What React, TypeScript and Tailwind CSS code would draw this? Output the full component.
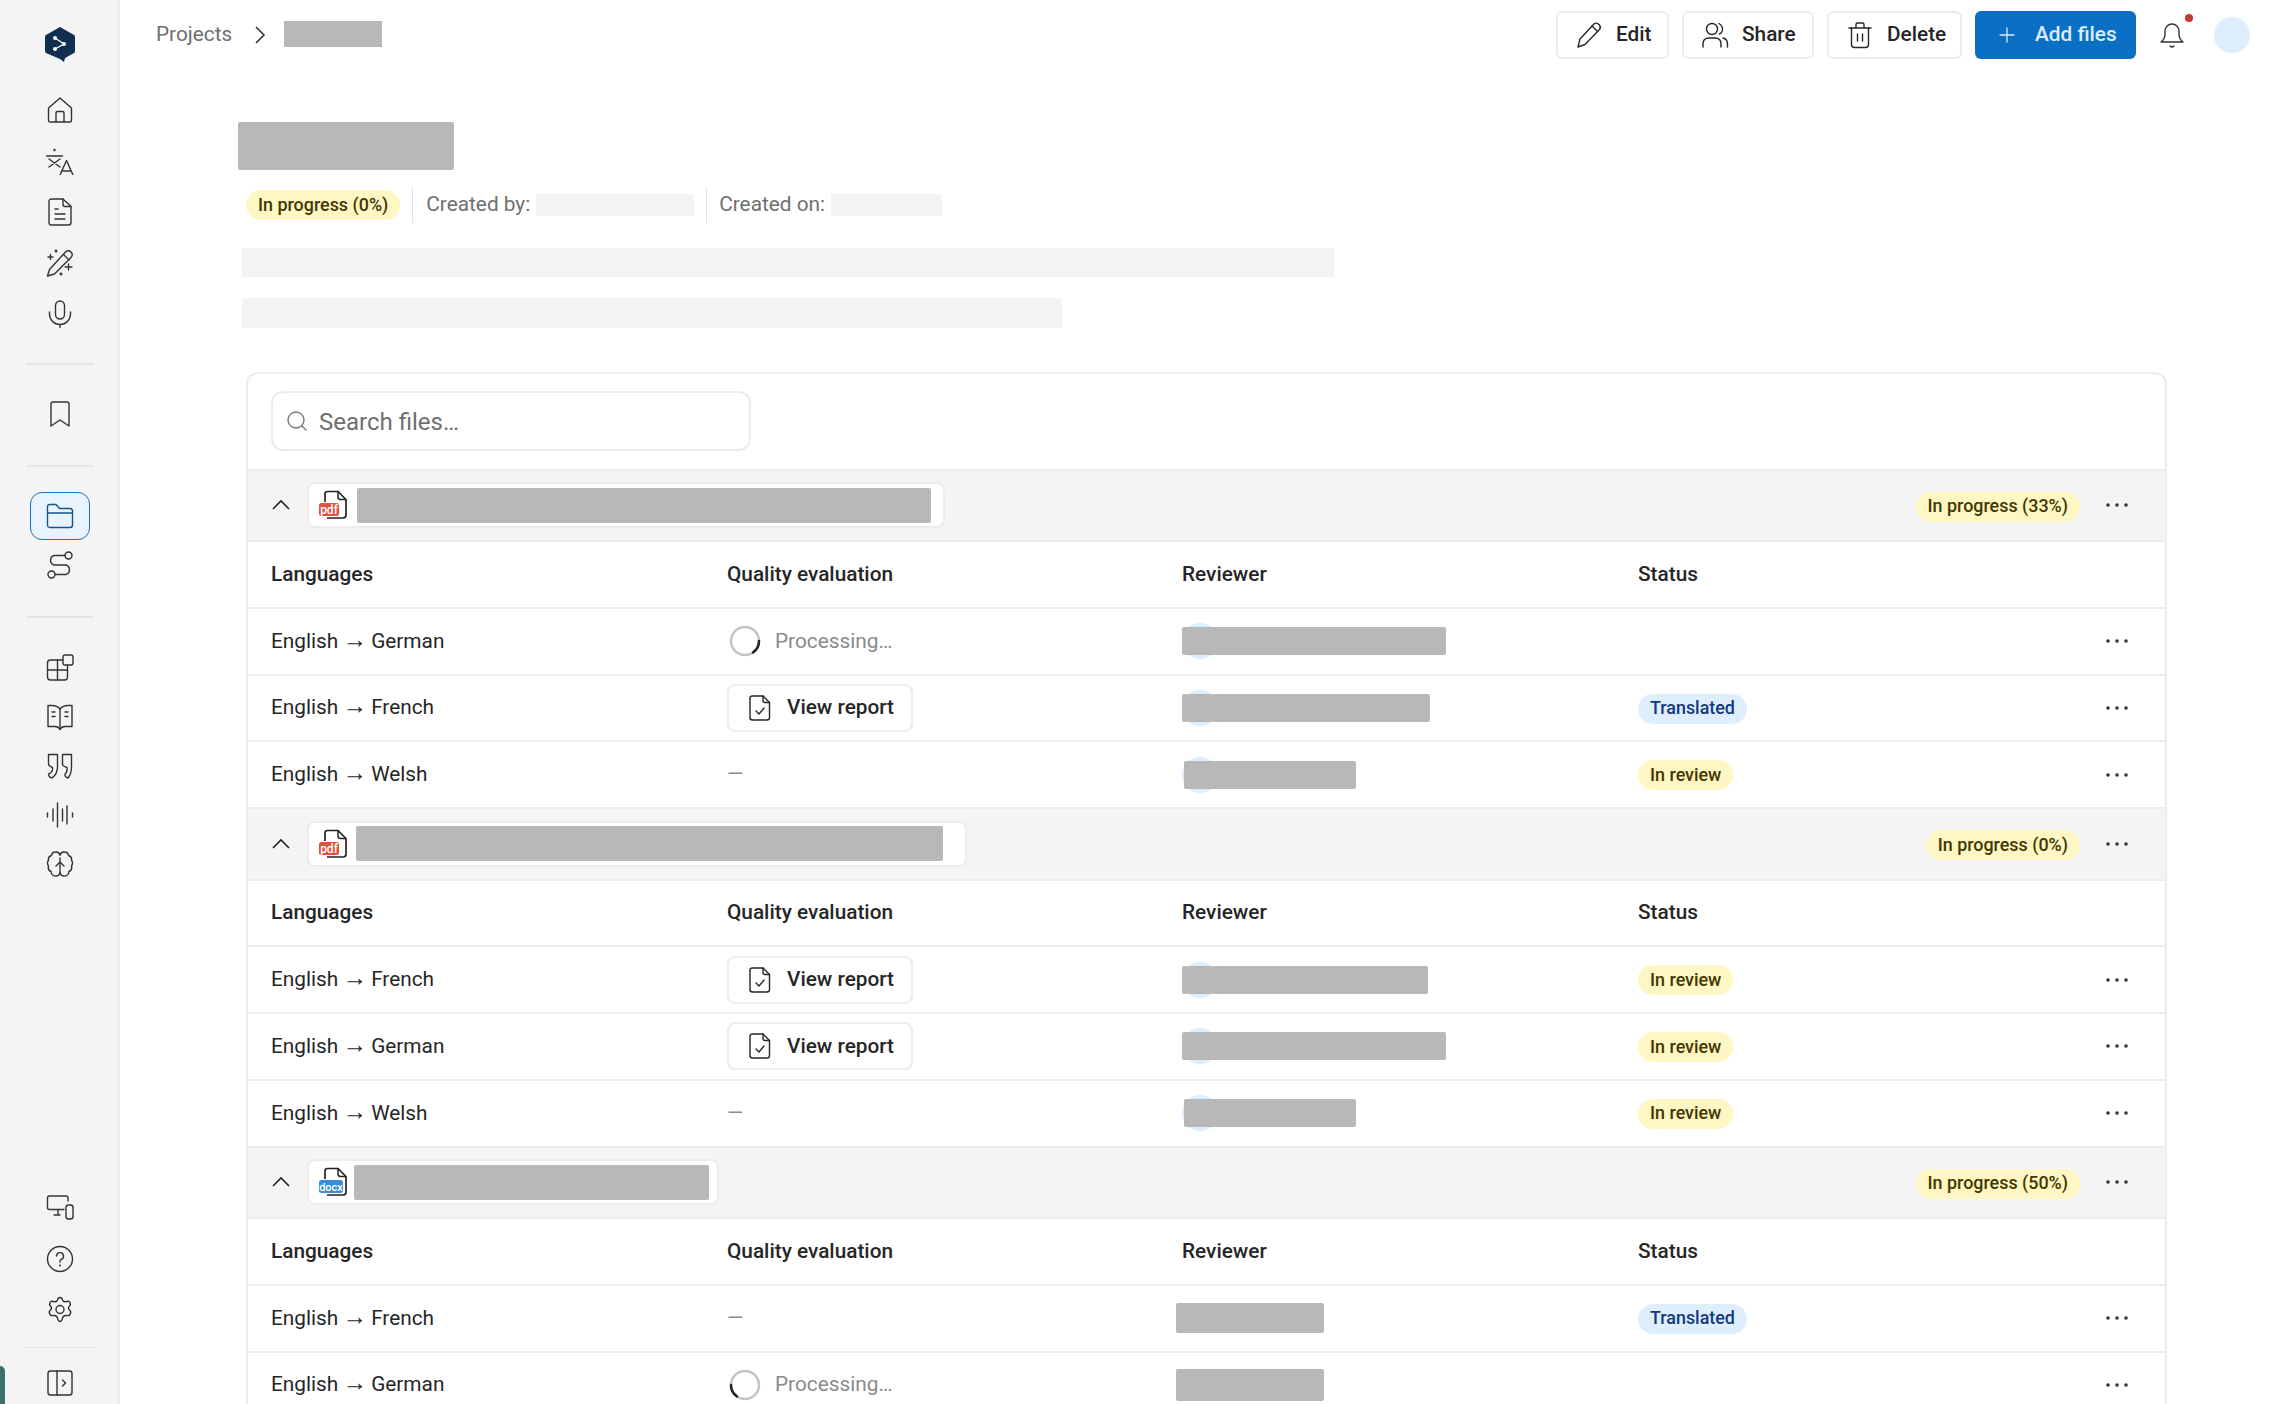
import type { ReactNode } from "react";
import { Plus, Search } from "lucide-react";

type Reviewer = { width: number; left: number; height?: number };

type Row = {
  lang: string;
  quality: "processing" | "report" | "none";
  arc?: "right" | "left";
  reviewer: Reviewer;
  status?: "Translated" | "In review";
};

type FileGroup = {
  kind: "pdf" | "docx";
  pillWidth: number;
  nameGap: number;
  nameWidth: number;
  progress: string;
  rows: Row[];
};

const files: FileGroup[] = [
  {
    kind: "pdf",
    pillWidth: 638,
    nameGap: 8,
    nameWidth: 574,
    progress: "In progress (33%)",
    rows: [
      { lang: "German", quality: "processing", arc: "right", reviewer: { width: 264, left: 0 } },
      { lang: "French", quality: "report", reviewer: { width: 248, left: 0 }, status: "Translated" },
      { lang: "Welsh", quality: "none", reviewer: { width: 172, left: 2 }, status: "In review" },
    ],
  },
  {
    kind: "pdf",
    pillWidth: 660,
    nameGap: 7,
    nameWidth: 587,
    progress: "In progress (0%)",
    rows: [
      { lang: "French", quality: "report", reviewer: { width: 246, left: 0 }, status: "In review" },
      { lang: "German", quality: "report", reviewer: { width: 264, left: 0 }, status: "In review" },
      { lang: "Welsh", quality: "none", reviewer: { width: 172, left: 2 }, status: "In review" },
    ],
  },
  {
    kind: "docx",
    pillWidth: 412,
    nameGap: 5,
    nameWidth: 355,
    progress: "In progress (50%)",
    rows: [
      { lang: "French", quality: "none", reviewer: { width: 148, left: -6, height: 30 }, status: "Translated" },
      { lang: "German", quality: "processing", arc: "left", reviewer: { width: 148, left: -6, height: 32 } },
    ],
  },
];

function Ico({ children, size = 28 }: { children: ReactNode; size?: number }) {
  return (
    <svg width={size} height={size} viewBox="0 0 28 28" fill="none" stroke="currentColor" strokeWidth="1.4" strokeLinecap="round" strokeLinejoin="round">
      {children}
    </svg>
  );
}

function Logo() {
  return (
    <svg width="32" height="38" viewBox="0 0 32 38">
      <path d="M16 1 L30 9 Q31 9.500 31 11 V25 Q31 26.500 30 27 L21 32 L20 36 L16 33 L2 27 Q1 26.500 1 25 V11 Q1 9.500 2 9 Z" fill="#0f2e50" />
      <path d="M11 12 L20 18 L11 23" stroke="#fff" strokeWidth="1.300" fill="none" />
      <circle cx="11" cy="12" r="2" fill="#fff" />
      <circle cx="20" cy="18" r="2" fill="#fff" />
      <circle cx="11" cy="23" r="2" fill="#fff" />
    </svg>
  );
}

const sideIcons: Record<string, ReactNode> = {
  home: (
    <>
      <path d="M2.500 12 L14 2 L25.500 12 V24 Q25.500 26 23.500 26 H4.500 Q2.500 26 2.500 24 Z" />
      <path d="M10 26 V17 Q10 15.500 11.500 15.500 H16.500 Q18 15.500 18 17 V26" />
    </>
  ),
  translate: (
    <>
      <path d="M0.500 9 H16.500" />
      <circle cx="8.500" cy="3" r="0.500" />
      <path d="M3 12 L14 20 M14 12 L3 20" />
      <path d="M14 28 L20.500 13.500 L27 28 M16 24 H25" />
    </>
  ),
  doc: (
    <>
      <path d="M5.500 1 H17 L25 8.500 V24.500 Q25 27 22.500 27 H5.500 Q3 27 3 24.500 V3.500 Q3 1 5.500 1 Z" />
      <path d="M17 1 V6.500 Q17 8.500 19 8.500 H25" />
      <path d="M9 11 H12 M9 16 H19 M9 21 H19" />
    </>
  ),
  wand: (
    <>
      <path d="M1.500 27 L3.500 20.500 L19.500 3 Q22.500 0.500 25 3 Q27.500 5.500 25 8.500 L8.500 25 Z" />
      <path d="M17.500 5.500 L23 11" />
      <path d="M2 8 H7 M4.500 5.500 V10.500 M10 1 V3 M9 2 H11 M19 18 H26 M22.500 15 V21 M15 24 V26 M14 25 H16" />
    </>
  ),
  mic: (
    <>
      <rect x="9.500" y="1" width="9" height="18" rx="4.500" />
      <path d="M3.500 12 V14 A10.500 10.500 0 0 0 24.500 14 V12 M14 24.500 V27.500" />
    </>
  ),
  bookmark: <path d="M5 26 V4 Q5 2 7 2 H21 Q23 2 23 4 V26 L14 20 Z" />,
  folder: (
    <>
      <path d="M1.500 5 Q1.500 2.500 4 2.500 H10 L13.500 6.500 H24 Q26.500 6.500 26.500 9 V23 Q26.500 25.500 24 25.500 H4 Q1.500 25.500 1.500 23 Z" />
      <path d="M1.500 11 H26.500" />
    </>
  ),
  route: (
    <>
      <circle cx="22.500" cy="4.500" r="3.500" />
      <circle cx="5.500" cy="23.500" r="3.500" />
      <path d="M19 4.500 H8 A5 5 0 0 0 8 14 H20 A5 5 0 0 1 20 23.500 H9" />
    </>
  ),
  grid: (
    <>
      <rect x="1.500" y="6" width="20" height="20" rx="3" />
      <path d="M11.500 6 V26 M1.500 16 H21.500" />
      <rect x="17" y="1" width="10" height="10" rx="2" fill="#f4f4f4" />
    </>
  ),
  book: (
    <>
      <path d="M14 6 Q11 2.500 6 2.500 H2 V23.500 H9 Q12.500 23.500 14 26.500 Q15.500 23.500 19 23.500 H26 V2.500 H22 Q17 2.500 14 6 Z" />
      <path d="M14 6 V26 M6 9 H9 M6 13.500 H9 M19 9 H22 M19 13.500 H22" />
    </>
  ),
  quote: (
    <>
      <path d="M2.500 2.500 H11.500 V15 Q11.500 22 6 26 Q2.500 25 2.500 22 Q7 20.500 6.500 15.500 Q2.500 14 2.500 12 Z" />
      <path d="M16.500 2.500 H25.500 V15 Q25.500 22 22 26 Q18.500 25 19 22 Q21.500 20.500 21 15.500 Q16.500 14 16.500 12 Z" />
    </>
  ),
  wave: <path d="M1.500 12 V16 M7 8 V20 M11.500 2 V26 M16.500 8 V20 M21 5 V23 M26.500 12 V16" />,
  brain: (
    <>
      <path d="M14 5 Q13 1.500 9.500 2 Q6 2 5.500 5.500 Q2 6.500 2.500 10 Q0.500 13 2.500 16 Q1.500 20 5 21.500 Q5.500 26 10 26 Q13 26 14 23" />
      <path d="M14 5 Q15 1.500 18.500 2 Q22 2 22.500 5.500 Q26 6.500 25.500 10 Q27.500 13 25.500 16 Q26.500 20 23 21.500 Q22.500 26 18 26 Q15 26 14 23" />
      <path d="M14 8 V23 M10 16 L14 12 L18 16" />
    </>
  ),
  devices: (
    <>
      <path d="M18 15.500 H3.500 Q1.500 15.500 1.500 13.500 V4 Q1.500 2 3.500 2 H20 Q22 2 22 4 V7" />
      <path d="M12 16 V21 M8 21 H14" />
      <rect x="20" y="11" width="7" height="14" rx="2.500" />
    </>
  ),
  help: (
    <>
      <circle cx="14" cy="14" r="12.500" />
      <path d="M10.500 11 A3.500 3.500 0 1 1 15 14.500 Q14 15 14 17" />
      <circle cx="14" cy="20.500" r="0.400" />
    </>
  ),
  gear: (
    <>
      <path d="M14 1.500 Q16 1.500 16.500 4 Q17.500 6.500 20.500 5.500 Q23 4.500 24 6.500 Q25 8.500 23.500 10 Q21.500 12.500 23.500 14 L24 14.500 Q25.500 16 24 18.500 Q23 20 20.500 19.500 Q17.500 19 16.500 22 Q16 25.500 14 25.500 Q12 25.500 11.500 22 Q10.500 19 7.500 19.500 Q5 20 4 18.500 Q2.500 16 4 14.500 L4.500 14 Q6.500 12.500 4.500 10 Q3 8.500 4 6.500 Q5 4.500 7.500 5.500 Q10.500 6.500 11.500 4 Q12 1.500 14 1.500 Z" />
      <circle cx="14" cy="13.500" r="4" />
    </>
  ),
  panel: (
    <>
      <rect x="2" y="2" width="24" height="24" rx="2.500" />
      <path d="M11 2 V26 M16.500 11 L19.500 14 L16.500 17" />
    </>
  ),
};

function SideItem({ name, h, active }: { name: string; h: string; active?: boolean }) {
  return (
    <div className={`flex w-[60px] shrink-0 items-center justify-center ${h} ${active ? "rounded-[12px] border border-[#1a73bd] bg-[#e8f3fd] text-[#16548f]" : "text-[#333333]"}`}>
      <Ico>{sideIcons[name]}</Ico>
    </div>
  );
}

function Divider({ className }: { className: string }) {
  return <div className={`h-[2px] w-[68px] shrink-0 bg-[#e6e6e6] ${className}`} />;
}

function Sidebar() {
  return (
    <aside className="relative flex h-full w-[120px] shrink-0 flex-col items-center border-r-2 border-[#ececec] bg-[#f4f4f4] pt-[26px] pl-[2px]">
      <div className="mb-[20px] flex h-[38px] items-center">
        <Logo />
      </div>
      <SideItem name="home" h="h-[51px]" />
      <SideItem name="translate" h="h-[51px]" />
      <SideItem name="doc" h="h-[51px]" />
      <SideItem name="wand" h="h-[51px]" />
      <SideItem name="mic" h="h-[51px]" />
      <Divider className="mt-[24px] mb-[24px]" />
      <SideItem name="bookmark" h="h-[50px]" />
      <Divider className="mt-[26px] mb-[25px]" />
      <SideItem name="folder" h="h-[48px]" active />
      <SideItem name="route" h="h-[49px]" />
      <Divider className="mt-[27px] mb-[25px]" />
      <SideItem name="grid" h="h-[49px]" />
      <SideItem name="book" h="h-[49px]" />
      <SideItem name="quote" h="h-[49px]" />
      <SideItem name="wave" h="h-[49px]" />
      <SideItem name="brain" h="h-[49px]" />
      <div className="flex-1" />
      <SideItem name="devices" h="h-[51px]" />
      <SideItem name="help" h="h-[51px]" />
      <SideItem name="gear" h="h-[51px]" />
      <div className="mt-[12px] mb-[14px] h-px w-[70px] bg-[#e3e3e3]" />
      <SideItem name="panel" h="h-[42px]" />
      <div className="absolute bottom-0 left-0 h-[38px] w-[5px] rounded-tr-full bg-[#3c6e6b]" />
    </aside>
  );
}

function TopButton({ icon, label, width }: { icon: ReactNode; label: string; width: string }) {
  return (
    <button className={`flex h-[48px] items-center gap-[13px] rounded-[6px] border-2 border-[#ececec] bg-white pl-[17px] text-[20.800px] font-medium text-[#262626] ${width}`}>
      {icon}
      {label}
    </button>
  );
}

function TopBar() {
  return (
    <header className="flex h-[70px] shrink-0 items-center pr-[26px] pl-[36px]">
      <span className="text-[20.800px] text-[#6f6f6f]">Projects</span>
      <svg className="mr-[18px] ml-[22px]" width="12" height="20" viewBox="0 0 12 20" fill="none" stroke="#333" strokeWidth="1.600">
        <path d="M2 2 L10 10 L2 18" />
      </svg>
      <div className="h-[26px] w-[98px] -translate-y-[1px] bg-[#b8b8b8]" />
      <div className="ml-auto flex items-center">
        <div className="flex gap-[13px]">
          <TopButton
            label="Edit"
            width="w-[113px]"
            icon={
              <Ico>
                <path d="M3 26 L5 18 L19 3 Q21.500 1 24 3.500 Q26.500 6 24.500 8.500 L10 23.500 Z" />
                <path d="M17 5 L22.500 10.500" />
              </Ico>
            }
          />
          <TopButton
            label="Share"
            width="w-[132px]"
            icon={
              <Ico>
                <circle cx="11" cy="8" r="5.500" />
                <path d="M2 26 V23 Q2 17 8 17 H14 Q20 17 20 23 V26 M18 2.500 Q22 5 21.500 9 Q21 12 18.500 13 M22 17 Q26.500 18 26.500 23 V26" />
              </Ico>
            }
          />
          <TopButton
            label="Delete"
            width="w-[135px]"
            icon={
              <Ico>
                <path d="M3 7 H25 M10 7 V3.500 Q10 2 11.500 2 H16.500 Q18 2 18 3.500 V7" />
                <path d="M5.500 7 V23.500 Q5.500 26.500 8.500 26.500 H19.500 Q22.500 26.500 22.500 23.500 V7" />
                <path d="M11.500 13 V20 M16.500 13 V20" />
              </Ico>
            }
          />
          <button className="flex h-[48px] w-[161px] items-center gap-[16px] rounded-[6px] bg-[#0b6fc4] pl-[20px] text-[20.800px] font-medium text-[#dcecfb]">
            <Plus size={24} strokeWidth={1.300} />
            Add files
          </button>
        </div>
        <div className="relative ml-[22px] flex w-[28px] justify-center text-[#333333]">
          <Ico>
            <path d="M3 21 Q7 18 7 13 V10 A7 7 0 0 1 21 10 V13 Q21 18 25 21 Z" />
            <path d="M12 25 Q14 27 16 25" />
          </Ico>
          <span className="absolute top-[-7px] right-[-7px] h-[8px] w-[8px] rounded-full bg-[#c0392b]" />
        </div>
        <div className="ml-[28px] h-[36px] w-[36px] rounded-full bg-[#dfeefd]" />
      </div>
    </header>
  );
}

function Badge({ label, tone }: { label: string; tone: "yellow" | "blue" }) {
  const cls = tone === "yellow" ? "bg-[#fef6c3] text-[#433600]" : "bg-[#dfeefd] text-[#123a7c]";
  return <span className={`inline-flex h-[30px] items-center rounded-full px-[12px] text-[17.900px] font-medium ${cls}`}>{label}</span>;
}

function Dots() {
  return (
    <svg width="22" height="6" viewBox="0 0 22 6" fill="#333333">
      <circle cx="2" cy="3" r="1.800" />
      <circle cx="11" cy="3" r="1.800" />
      <circle cx="20" cy="3" r="1.800" />
    </svg>
  );
}

function Spinner({ arc }: { arc?: "right" | "left" }) {
  return (
    <svg width="32" height="32" viewBox="0 0 32 32" fill="none" strokeWidth="2.500">
      <circle cx="16" cy="16" r="14" stroke="#c4c4c4" />
      {arc === "left" ? <path d="M8 27.500 A14 14 0 0 1 2 16" stroke="#222" strokeLinecap="round" /> : <path d="M30 16 A14 14 0 0 1 24 27.500" stroke="#222" strokeLinecap="round" />}
    </svg>
  );
}

function FileIcon({ kind }: { kind: "pdf" | "docx" }) {
  const isPdf = kind === "pdf";
  return (
    <svg width="30" height="30" viewBox="0 0 30 30" fill="none">
      <path d="M6 12 V4 Q6 1.500 8.500 1.500 H19 L27 9.500 V25 Q27 28 24 28 H8" stroke="#222" strokeWidth="1.700" />
      <path d="M19 1.500 V7 Q19 9.500 21.500 9.500 H27" stroke="#222" strokeWidth="1.500" />
      <rect x="0" y="13" width={isPdf ? 20 : 24} height="13" rx="2.500" fill={isPdf ? "#e0513f" : "#3d8bdb"} />
      <text x={isPdf ? 10 : 12} y="23.500" textAnchor="middle" fontFamily="Roboto, sans-serif" fontSize={isPdf ? 12 : 11} fontWeight="500" fill="#fff">
        {kind}
      </text>
    </svg>
  );
}

function ReportButton() {
  return (
    <button className="flex h-[48px] w-[186px] items-center gap-[13px] rounded-[8px] border-2 border-[#ececec] bg-white pl-[17px] text-[20.800px] font-medium text-[#262626]">
      <Ico>
        <path d="M6.500 2 H17 L23.500 8.500 V23.500 Q23.500 26 21 26 H6.500 Q4 26 4 23.500 V4.500 Q4 2 6.500 2 Z" />
        <path d="M17 2 V6.500 Q17 8.500 19 8.500 H23.500" />
        <path d="M10 17 L13 20 L18 14" />
      </Ico>
      View report
    </button>
  );
}

function TableGrid({ children, className }: { children: ReactNode; className: string }) {
  return <div className={`grid h-[66.750px] grid-cols-[456px_455px_456px_1fr_38px] items-center border-t-2 border-[#ececec] pr-[21px] pl-[23px] text-[20.800px] text-[#262626] ${className}`}>{children}</div>;
}

function ReviewerCell({ reviewer }: { reviewer: Reviewer }) {
  const height = reviewer.height ?? 28;
  return (
    <div className="relative h-[36px]">
      {reviewer.left >= 0 && <div className="h-[36px] w-[36px] rounded-full bg-[#dfeefd]" />}
      <div className="absolute rounded-[2px] bg-[#b8b8b8]" style={{ width: reviewer.width, left: reviewer.left, height, top: (36 - height) / 2 }} />
    </div>
  );
}

function FileSection({ file }: { file: FileGroup }) {
  return (
    <section>
      <div className="flex h-[71.500px] items-center border-t-2 border-[#ececec] bg-[#f4f4f4] pr-[37px] pl-[23px]">
        <svg width="20" height="12" viewBox="0 0 20 12" fill="none" stroke="#222" strokeWidth="1.600">
          <path d="M2 10 L10 2 L18 10" />
        </svg>
        <div className="ml-[16px] flex h-[46px] items-center rounded-[8px] border-2 border-[#ececec] bg-white pl-[10px]" style={{ width: file.pillWidth, gap: file.nameGap }}>
          <FileIcon kind={file.kind} />
          <div className="h-[35px] rounded-[2px] bg-[#b8b8b8]" style={{ width: file.nameWidth }} />
        </div>
        <div className="ml-auto flex items-center gap-[26px]">
          <div className="mt-[3px]">
            <Badge label={file.progress} tone="yellow" />
          </div>
          <Dots />
        </div>
      </div>
      <TableGrid className="font-medium">
        <span>Languages</span>
        <span>Quality evaluation</span>
        <span>Reviewer</span>
        <span>Status</span>
        <span />
      </TableGrid>
      {file.rows.map((row) => (
        <TableGrid key={row.lang} className="">
          <span>
            English <span className="-mx-[1px] font-['Liberation_Sans',sans-serif] text-[24.500px] leading-none">→</span> {row.lang}
          </span>
          <div>
            {row.quality === "processing" && (
              <div className="ml-[2px] flex items-center gap-[14px] text-[#8a8a8a]">
                <Spinner arc={row.arc} />
                <span>Processing…</span>
              </div>
            )}
            {row.quality === "report" && <ReportButton />}
            {row.quality === "none" && <span className="text-[#8a8a8a]">—</span>}
          </div>
          <ReviewerCell reviewer={row.reviewer} />
          <div>{row.status && <Badge label={row.status} tone={row.status === "Translated" ? "blue" : "yellow"} />}</div>
          <Dots />
        </TableGrid>
      ))}
    </section>
  );
}

export default function App() {
  return (
    <div className="flex h-screen w-full overflow-hidden bg-white font-['Roboto',sans-serif]">
      <Sidebar />
      <main className="flex min-w-0 flex-1 flex-col">
        <TopBar />
        <div className="ml-[126px] w-[1921px]">
          <div className="mt-[52px] -ml-[8px] h-[48px] w-[216px] rounded-[2px] bg-[#b8b8b8]" />
          <div className="mt-[17px] flex h-[36px] items-center text-[20.800px] text-[#6f6f6f]">
            <Badge label="In progress (0%)" tone="yellow" />
            <div className="ml-[12px] h-[36px] w-px bg-[#e3e3e3]" />
            <span className="ml-[13px]">Created by:</span>
            <div className="ml-[6px] h-[22px] w-[158px] bg-[#f3f3f3]" />
            <div className="ml-[12px] h-[36px] w-px bg-[#e3e3e3]" />
            <span className="ml-[12px]">Created on:</span>
            <div className="ml-[6px] h-[22px] w-[111px] bg-[#f3f3f3]" />
          </div>
          <div className="mt-[25px] -ml-[4px] h-[29px] w-[1092px] bg-[#f3f3f3]" />
          <div className="mt-[21px] -ml-[4px] h-[30px] w-[820px] bg-[#f3f3f3]" />
          <div className="mt-[44px] rounded-t-[12px] border-x-2 border-t-2 border-[#ececec]">
            <div className="h-[94.500px] pt-[17px] pl-[23px]">
              <div className="flex h-[60px] w-[480px] items-center gap-[10px] rounded-[12px] border-2 border-[#ececec] pl-[12px] text-[24px] text-[#6f6f6f]">
                <Search size={24} strokeWidth={1.300} />
                <span className="pt-[1px]">Search files…</span>
              </div>
            </div>
            {files.map((file, i) => (
              <FileSection key={i} file={file} />
            ))}
          </div>
        </div>
      </main>
    </div>
  );
}
